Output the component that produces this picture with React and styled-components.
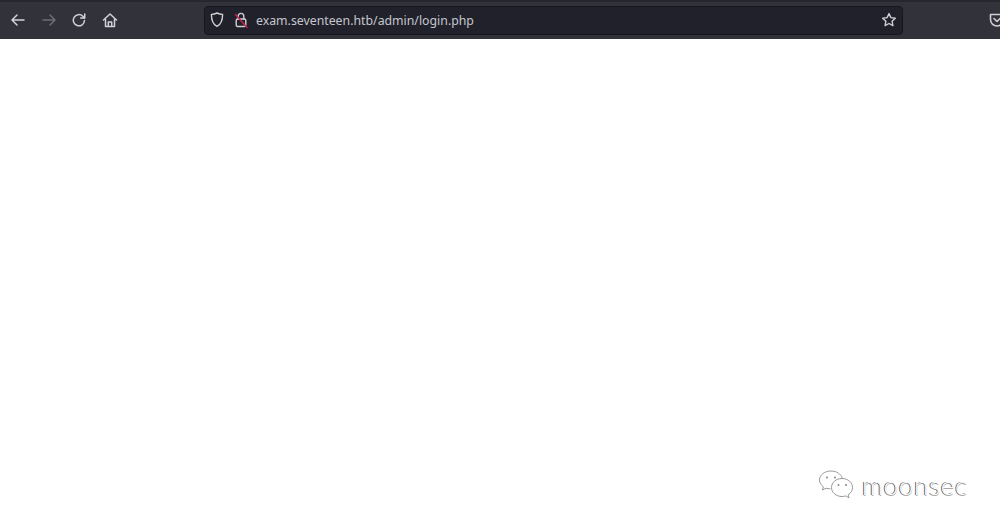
import React from "react";
import styled, { createGlobalStyle } from "styled-components";

const Global = createGlobalStyle`
  html, body { margin: 0; padding: 0; background: #fff; }
  #root { height: 528px; overflow: hidden; }
`;

const Page = styled.div`
  width: 1000px;
  height: 528px;
  display: flex;
  flex-direction: column;
  background: #fff;
  overflow: hidden;
`;

const Toolbar = styled.div`
  height: 39px;
  flex: none;
  display: flex;
  align-items: center;
  background: #31323a;
  border-top: 2px solid #26262e;
  box-sizing: border-box;
  padding: 0 0 1px 8px;
`;

const NavGroup = styled.div`
  display: flex;
  align-items: center;
  gap: 10.5px;
  width: 196px;
  flex: none;
  filter: blur(0.3px);
`;

const NavIcon = styled.svg`
  width: 20px;
  height: 20px;
  fill: none;
  stroke: ${(p) => (p.$dim ? "#6c6d75" : "#d2d2d6")};
  stroke-width: 1.5;
  stroke-linecap: round;
  stroke-linejoin: round;
  flex: none;
`;

const UrlBar = styled.div`
  width: 699px;
  height: 29px;
  flex: none;
  box-sizing: border-box;
  display: flex;
  align-items: center;
  padding: 0 5px 0 4px;
  background: #20212b;
  border: 1px solid #16161d;
  border-radius: 4px;
`;

const UrlIcon = styled.svg`
  width: 16px;
  height: 18px;
  flex: none;
  fill: none;
  stroke: #cfcfd3;
  stroke-width: 1.4;
  stroke-linecap: round;
  stroke-linejoin: round;
  filter: blur(0.3px);
`;

const LockIcon = styled(UrlIcon)`
  margin-left: 8px;
`;

const UrlText = styled.span`
  margin-left: 7px;
  flex: 1;
  font: 12.3px "Noto Sans", "Open Sans", sans-serif;
  color: #c6c6cb;
  white-space: nowrap;
`;

const Pocket = styled.svg`
  width: 16px;
  height: 18px;
  margin-left: 86px;
  flex: none;
  fill: none;
  stroke: #cfcfd3;
  stroke-width: 1.6;
  stroke-linecap: round;
  stroke-linejoin: round;
  filter: blur(0.3px);
`;

const Content = styled.div`
  flex: 1;
  display: flex;
  align-items: flex-end;
  justify-content: flex-end;
  padding: 0 32px 27px 0;
`;

const Watermark = styled.div`
  display: flex;
  align-items: center;
  gap: 8px;
`;

const Bubbles = styled.svg`
  width: 36px;
  height: 32px;
  fill: none;
  stroke: #8f8f8f;
  stroke-width: 0.9;
  flex: none;
`;

const Brand = styled.span`
  font: 300 26px "Lato", "Open Sans", sans-serif;
  letter-spacing: 0.7px;
  color: #fff;
  text-shadow: -1px 0 0 #5c5c5c, 0 1px 0 #a8a8a8;
`;

export default function App() {
  return (
    <Page>
      <Global />
      <Toolbar>
        <NavGroup>
          <NavIcon viewBox="0 0 20 20">
            <path d="M16 10H4M9 5l-5 5 5 5" />
          </NavIcon>
          <NavIcon viewBox="0 0 20 20" $dim>
            <path d="M4 10h12M11 5l5 5-5 5" />
          </NavIcon>
          <NavIcon viewBox="0 0 20 20">
            <path d="M15.5 10.5a5.6 5.6 0 1 1-1.7-4.3L15.5 8" />
            <path d="M15.7 4v4h-4" />
          </NavIcon>
          <NavIcon viewBox="0 0 20 20">
            <path d="M3.5 10 10 4l6.5 6M5.5 9v7.5h9V9M8.3 16.5v-4.5h3.4v4.5" />
          </NavIcon>
        </NavGroup>
        <UrlBar>
          <UrlIcon viewBox="0 0 16 18">
            <path d="M8 2c2 1 3.8 1.3 5.6 1.4 0 5.6-1.5 9.8-5.6 12C3.9 13.2 2.4 9 2.4 3.4 4.2 3.3 6 3 8 2Z" />
          </UrlIcon>
          <LockIcon viewBox="0 0 16 18">
            <path d="M5.2 8V5.2a2.8 2.8 0 0 1 5.6 0V8" />
            <rect x="3.2" y="8" width="9.6" height="7.5" rx="1.5" />
            <path d="M2.5 3.5 14 16.5" stroke="#c8264f" />
          </LockIcon>
          <UrlText>exam.seventeen.htb/admin/login.php</UrlText>
          <UrlIcon viewBox="0 0 16 18">
            <path d="m8 2.6 1.9 4 4.4.6-3.2 3 .8 4.4L8 12.5l-3.9 2.1.8-4.4-3.2-3 4.4-.6Z" />
          </UrlIcon>
        </UrlBar>
        <Pocket viewBox="0 0 16 18">
          <path d="M1.5 3.5h13v5a6.5 6.5 0 0 1-13 0Z" />
          <path d="m5 7.5 3 3 3-3" />
        </Pocket>
      </Toolbar>
      <Content>
        <Watermark>
          <Bubbles viewBox="0 0 36 30">
            <path d="M13 1C6.5 1 1.5 5 1.5 10c0 2.8 1.5 5 3.8 6.7L4.5 20l3.6-1.8c1.4.4 2.6.6 4.4.6" />
            <path d="M13 1c5.6 0 10 3 11.2 7" />
            <path d="M24 8.5c-6 0-10.5 4-10.5 9s4.5 9 10.5 9c1.3 0 2.5-.2 3.7-.6l3.3 2-.8-3.2c2.8-1.7 4.3-4.2 4.3-7.2 0-5-4.5-9-10.5-9Z" />
            <circle cx="9" cy="7.5" r="1" fill="#888" stroke="none" />
            <circle cx="17" cy="7.5" r="1" fill="#888" stroke="none" />
            <circle cx="20.5" cy="15" r="1" fill="#888" stroke="none" />
            <circle cx="28" cy="15" r="1" fill="#888" stroke="none" />
          </Bubbles>
          <Brand>moonsec</Brand>
        </Watermark>
      </Content>
    </Page>
  );
}
